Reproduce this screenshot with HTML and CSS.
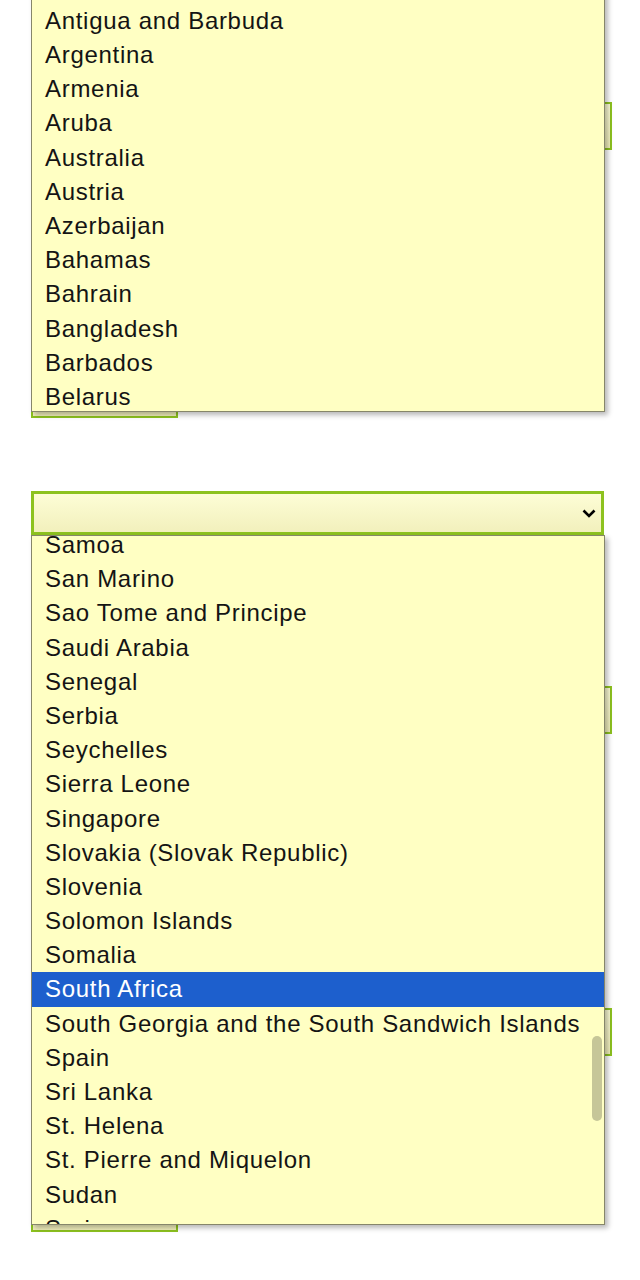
FILE: index.html
```html
<!DOCTYPE html>
<html lang="en">
<head>
<meta charset="utf-8">
<title>Country select</title>
<link rel="stylesheet" href="styles.css">
</head>
<body>
<div class="page">
  <div class="field input-wide gap-a1"></div>
  <div class="field select-small gap-a2"></div>
  <div class="field select-main gap-b0">
    <svg class="chevron" width="14" height="9" viewBox="0 0 14 9"><path d="M1.5 1.5 L7 7 L12.5 1.5" fill="none" stroke="#000" stroke-width="2.6"/></svg>
  </div>
  <div class="field input-wide gap-b1"></div>
  <div class="field input-wide gap-b2"></div>
  <div class="field select-small gap-b3"></div>

  <div class="list list-a">
    <ul class="list-inner inner-a">
      <li>Antarctica</li>
      <li>Antigua and Barbuda</li>
      <li>Argentina</li>
      <li>Armenia</li>
      <li>Aruba</li>
      <li>Australia</li>
      <li>Austria</li>
      <li>Azerbaijan</li>
      <li>Bahamas</li>
      <li>Bahrain</li>
      <li>Bangladesh</li>
      <li>Barbados</li>
      <li>Belarus</li>
      <li>Belgium</li>
    </ul>
  </div>

  <div class="list list-b">
    <ul class="list-inner inner-b">
      <li>Samoa</li>
      <li>San Marino</li>
      <li>Sao Tome and Principe</li>
      <li>Saudi Arabia</li>
      <li>Senegal</li>
      <li>Serbia</li>
      <li>Seychelles</li>
      <li>Sierra Leone</li>
      <li>Singapore</li>
      <li>Slovakia (Slovak Republic)</li>
      <li>Slovenia</li>
      <li>Solomon Islands</li>
      <li>Somalia</li>
      <li class="selected">South Africa</li>
      <li>South Georgia and the South Sandwich Islands</li>
      <li>Spain</li>
      <li>Sri Lanka</li>
      <li>St. Helena</li>
      <li>St. Pierre and Miquelon</li>
      <li>Sudan</li>
      <li>Suriname</li>
    </ul>
    <div class="thumb"></div>
  </div>
</div>
</body>
</html>
```

FILE: styles.css
```css
html, body {
  margin: 0;
  padding: 0;
  background: #ffffff;
}
.page {
  position: relative;
  width: 640px;
  height: 1280px;
  overflow: hidden;
  padding-left: 31px;
  box-sizing: border-box;
  font-family: "Liberation Sans", Arial, sans-serif;
}
.field {
  box-sizing: border-box;
  border: 2px solid #8dc21f;
  background: linear-gradient(#fdfdd6, #f2f0bc);
}
.input-wide {
  width: 581px;
  height: 48px;
}
.select-small {
  width: 147px;
  height: 44px;
}
.select-main {
  width: 573px;
  height: 44px;
  border-width: 3px;
  display: flex;
  align-items: center;
  justify-content: flex-end;
  padding-right: 5px;
}
.gap-a1 { margin-top: 102px; }
.gap-a2 { margin-top: 224px; }
.gap-b0 { margin-top: 73px; }
.gap-b1 { margin-top: 151px; }
.gap-b2 { margin-top: 274px; }
.gap-b3 { margin-top: 132px; }

.list {
  position: absolute;
  left: 31px;
  width: 574px;
  box-sizing: border-box;
  border: 1px solid #86866a;
  background: #ffffc3;
  overflow: hidden;
  box-shadow: 3px 3px 5px rgba(0, 0, 0, 0.28);
}
.list-a {
  top: -20px;
  height: 432px;
}
.list-b {
  top: 535px;
  height: 690px;
}
.list-inner {
  list-style: none;
  margin: 0;
  padding: 0;
}
.inner-a { margin-top: -11.3px; }
.inner-b { margin-top: -8px; }
.list-inner li {
  height: 34.2px;
  line-height: 34.2px;
  padding-left: 13px;
  font-size: 24px;
  letter-spacing: 0.7px;
  color: #141414;
  white-space: nowrap;
}
.list-inner li.selected {
  background: #1d5fcd;
  color: #ffffff;
}
.thumb {
  position: absolute;
  right: 2px;
  top: 500px;
  width: 10px;
  height: 85px;
  border-radius: 5px;
  background: #c6c698;
}
```
